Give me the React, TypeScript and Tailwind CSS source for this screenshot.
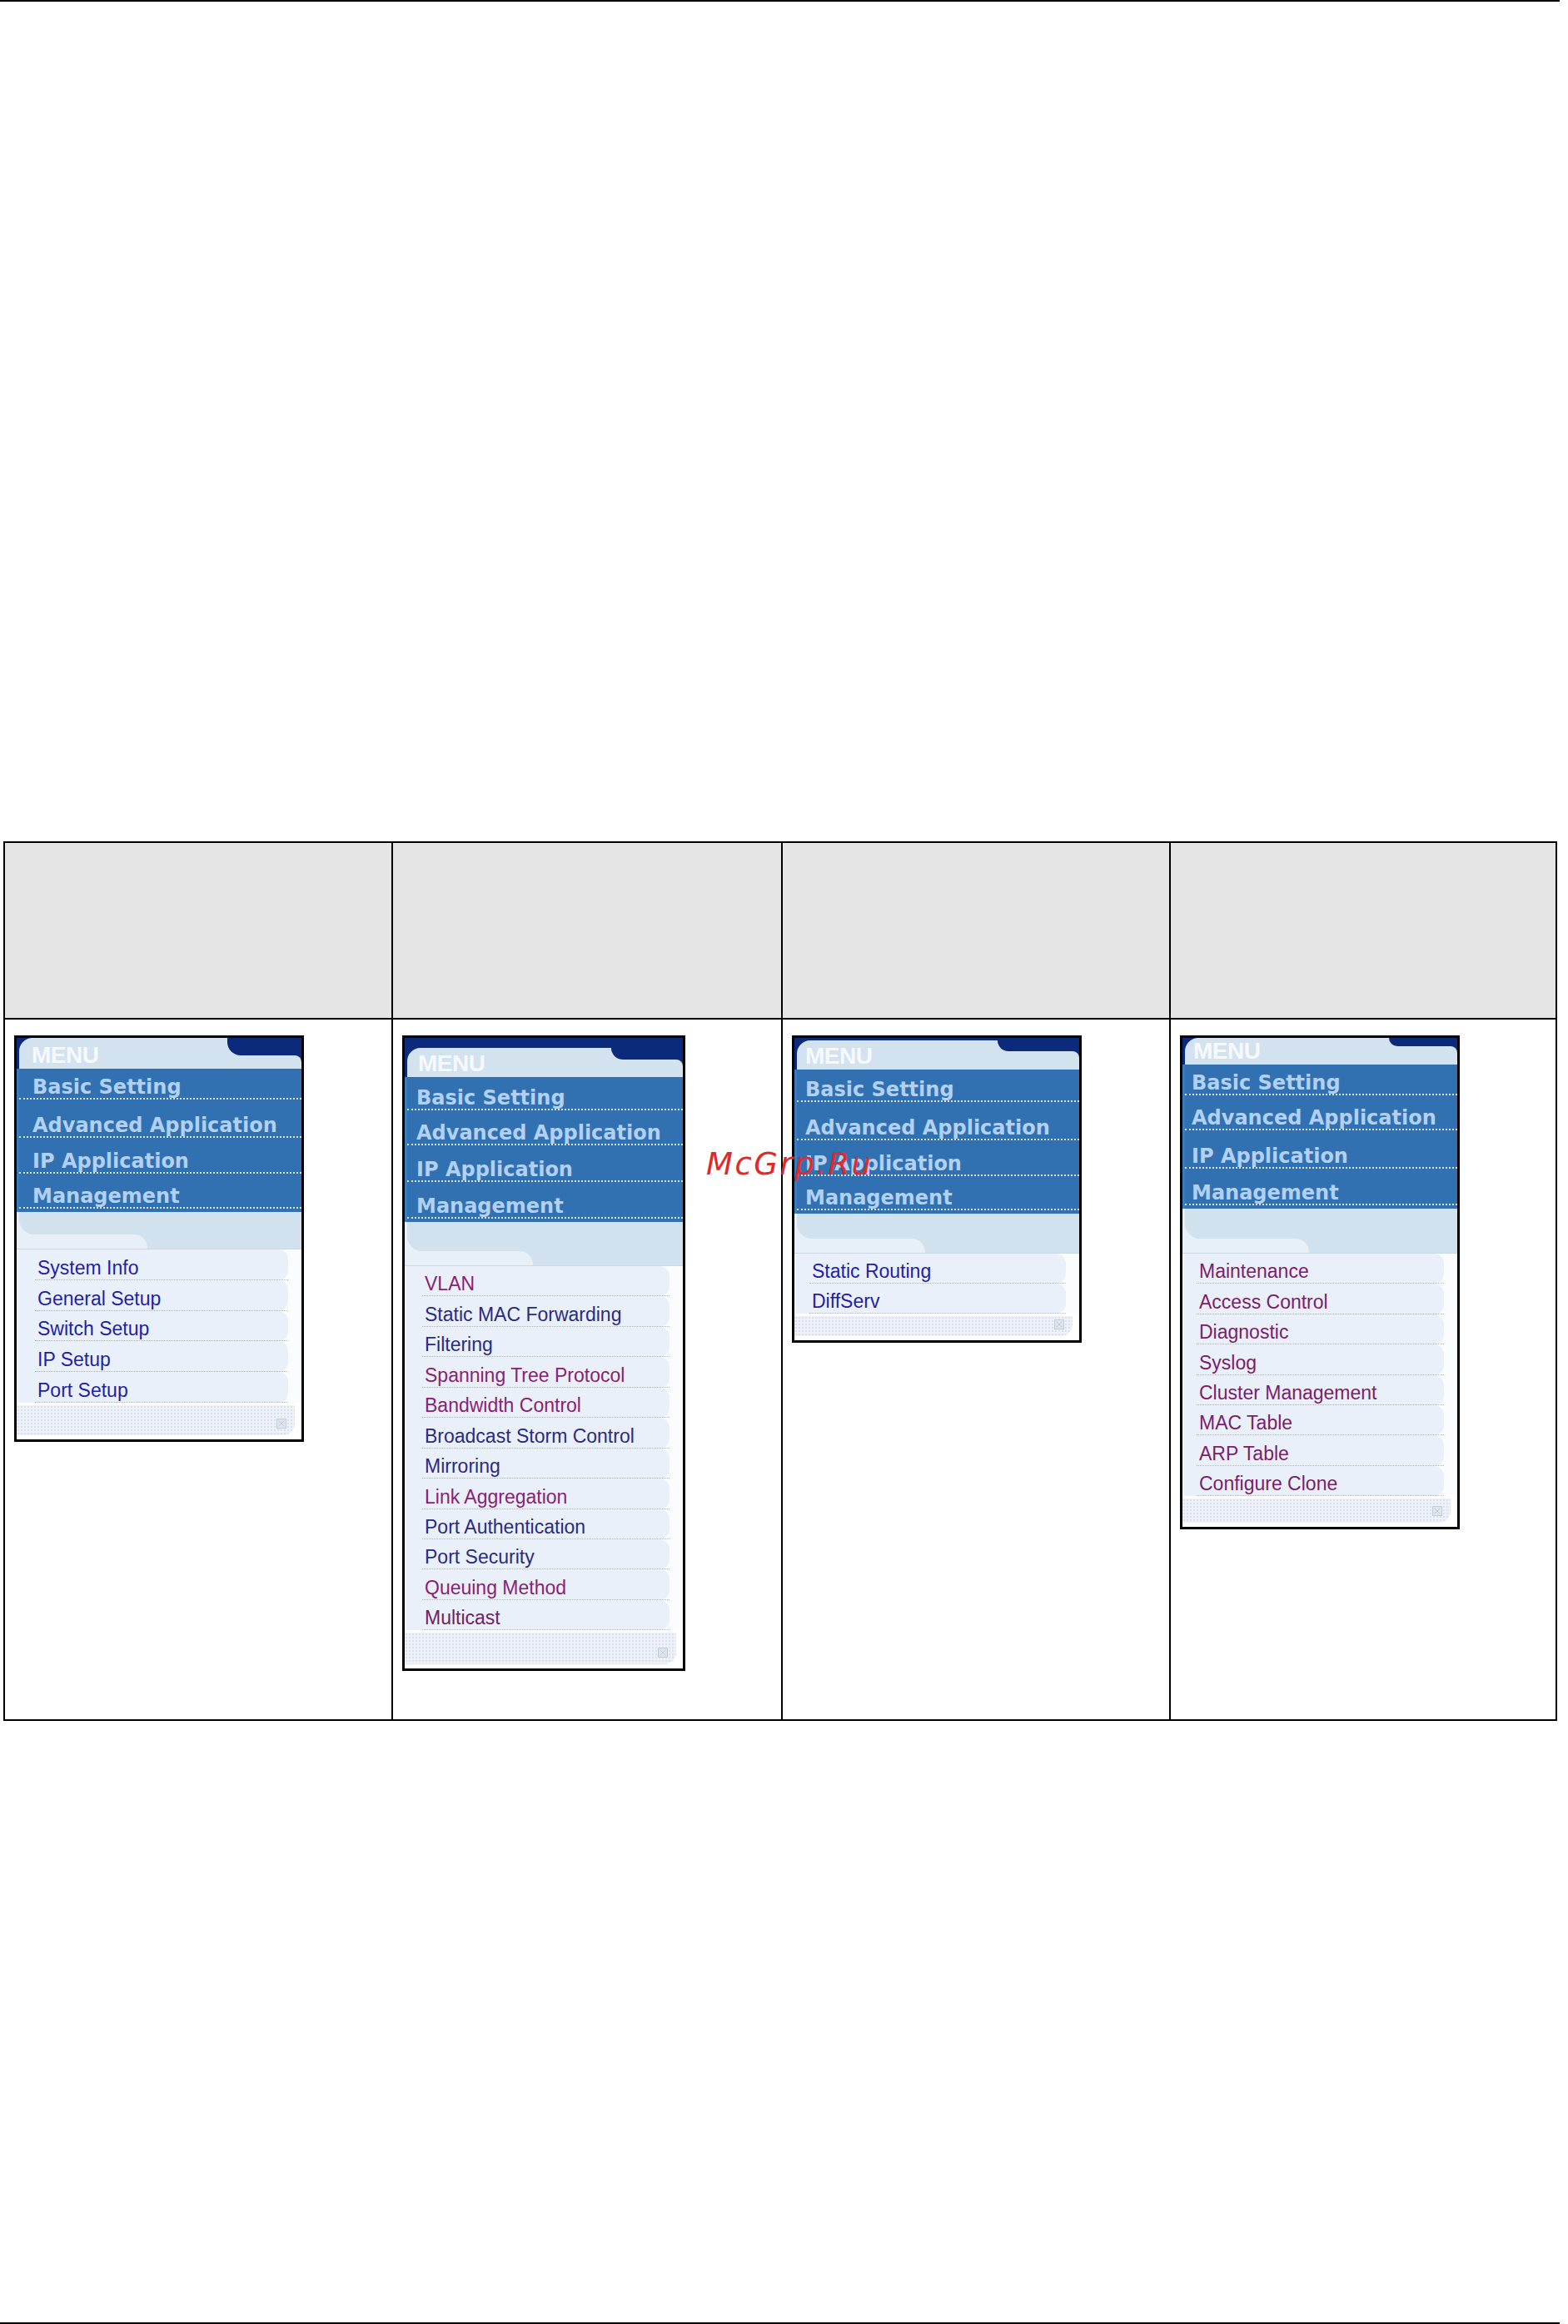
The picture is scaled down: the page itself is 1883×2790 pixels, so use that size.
import React from "react";

type Item = { t: string; c: string };
type MenuCfg = {
  w: number;
  h: number;
  headerH: number;
  tabMt: number;
  notchLeft: number;
  notchH: number;
  menuPl: number;
  rows: number[];
  rowPl: number;
  bandH: number;
  itemH: number;
  itemPl: number;
  items: Item[];
  footerH: number;
};

const BLUE1 = "#1f1fa8";
const NAVYTXT = "#2b2b80";
const PURP = "#8a2274";
const PURP4 = "#7c1d6c";

const rowLabels = ["Basic Setting", "Advanced Application", "IP Application", "Management"];

function Menu({ cfg }: { cfg: MenuCfg }) {
  return (
    <div
      className="border-[3px] border-black bg-white flex flex-col overflow-hidden"
      style={{ width: cfg.w, height: cfg.h }}
    >
      {/* header */}
      <div className="bg-[#0c2a7c] flex flex-col shrink-0" style={{ height: cfg.headerH }}>
        <div
          className="relative flex-1 bg-[#d3e2ef] rounded-tl-[16px] rounded-tr-[10px] ml-[3px] flex items-end"
          style={{ marginTop: cfg.tabMt }}
        >
          <div
            className="absolute top-0 right-0 bg-[#0c2a7c] rounded-bl-[16px]"
            style={{ left: cfg.notchLeft, height: cfg.notchH }}
          />
          <div className="absolute right-0 bg-[#0c2a7c] w-[8px] h-[8px]" style={{ top: cfg.notchH }}>
            <div className="w-full h-full bg-[#d3e2ef] rounded-tr-[8px]" />
          </div>
          <span
            className="relative text-[28px] leading-none font-bold text-[#f6f9fd] pb-[2px] tracking-[-0.5px]"
            style={{ fontFamily: '"Liberation Sans", Arial, sans-serif', paddingLeft: cfg.menuPl }}
          >
            MENU
          </span>
        </div>
      </div>
      {/* blue rows */}
      <div className="bg-[#3170b1] pb-[4px] shrink-0 border-l-[3px] border-[#3a7cc0]">
        {cfg.rows.map((rh, i) => (
          <div
            key={i}
            className="flex items-end border-b-2 border-dotted border-[#d4e4f4]"
            style={{ height: rh }}
          >
            <span
              className="text-[24px] leading-none font-bold text-[#b2d1f2] pb-[1px]"
              style={{ fontFamily: '"DejaVu Sans", Verdana, sans-serif', paddingLeft: cfg.rowPl - 3 }}
            >
              {rowLabels[i]}
            </span>
          </div>
        ))}
      </div>
      {/* band */}
      <div className="bg-[#e7eff7] flex flex-col shrink-0 border-b border-[#c9d7e6]" style={{ height: cfg.bandH }}>
        <div className="flex-1 bg-[#d2e1ee] rounded-bl-[18px] ml-[3px]" />
        <div className="h-[17px] bg-[#d2e1ee] flex">
          <div className="w-[46%] h-full bg-[#e7eff7] rounded-tr-[16px]" />
        </div>
      </div>
      {/* items */}
      <div className="flex flex-col shrink-0 bg-[#fbfcfe]">
        {cfg.items.map((it, i) => (
          <div key={i} className="pr-[16px] pl-[2px]" style={{ height: cfg.itemH }}>
            <div className="h-full bg-[#e9f0f9] rounded-r-[12px] flex items-end">
              <div
                className="flex-1 border-b border-dotted border-[#a9b7cc] pb-[2px]"
                style={{ marginLeft: cfg.itemPl - 5 }}
              >
                <span
                  className="block text-[23px] leading-none pl-[3px]"
                  style={{ fontFamily: '"Liberation Sans", Arial, sans-serif', color: it.c }}
                >
                  {it.t}
                </span>
              </div>
            </div>
          </div>
        ))}
      </div>
      {/* footer */}
      <div className="flex-1 flex flex-col pt-[3px] pb-[5px] pr-[8px]">
        <div className="relative flex-1 bg-[#eef2f8] bg-[radial-gradient(circle,#d8e0eb_0.9px,transparent_1.1px)] bg-size-[4px_4px] rounded-br-[14px] flex items-end justify-end pr-[10px] pb-[8px]">
          <svg width="12" height="12" viewBox="0 0 12 12">
            <rect x="0.5" y="0.5" width="11" height="11" fill="#dfe5ee" stroke="#c2ccd9" />
            <path d="M2.5 2.5 L9.5 9.5 M9.5 2.5 L2.5 9.5" stroke="#c2ccd9" strokeWidth="1" />
          </svg>
        </div>
      </div>
    </div>
  );
}

const menu1: MenuCfg = {
  w: 348,
  h: 488,
  headerH: 37,
  tabMt: 0,
  notchLeft: 250,
  notchH: 21,
  menuPl: 15,
  rows: [37, 46, 43, 42],
  rowPl: 19,
  bandH: 45,
  itemH: 36.8,
  itemPl: 25,
  items: [
    { t: "System Info", c: BLUE1 },
    { t: "General Setup", c: BLUE1 },
    { t: "Switch Setup", c: BLUE1 },
    { t: "IP Setup", c: BLUE1 },
    { t: "Port Setup", c: BLUE1 },
  ],
  footerH: 44,
};

const menu2: MenuCfg = {
  w: 340,
  h: 763,
  headerH: 47,
  tabMt: 12,
  notchLeft: 245,
  notchH: 14,
  menuPl: 13,
  rows: [40, 42, 44, 44],
  rowPl: 14,
  bandH: 53,
  itemH: 36.45,
  itemPl: 24,
  items: [
    { t: "VLAN", c: PURP },
    { t: "Static MAC Forwarding", c: NAVYTXT },
    { t: "Filtering", c: NAVYTXT },
    { t: "Spanning Tree Protocol", c: PURP },
    { t: "Bandwidth Control", c: PURP },
    { t: "Broadcast Storm Control", c: NAVYTXT },
    { t: "Mirroring", c: NAVYTXT },
    { t: "Link Aggregation", c: PURP },
    { t: "Port Authentication", c: NAVYTXT },
    { t: "Port Security", c: NAVYTXT },
    { t: "Queuing Method", c: PURP },
    { t: "Multicast", c: "#702068" },
  ],
  footerH: 45,
};

const menu3: MenuCfg = {
  w: 348,
  h: 369,
  headerH: 38,
  tabMt: 3,
  notchLeft: 241,
  notchH: 13,
  menuPl: 10,
  rows: [39, 46, 43, 41],
  rowPl: 13,
  bandH: 48,
  itemH: 36,
  itemPl: 21,
  items: [
    { t: "Static Routing", c: BLUE1 },
    { t: "DiffServ", c: BLUE1 },
  ],
  footerH: 32,
};

const menu4: MenuCfg = {
  w: 336,
  h: 593,
  headerH: 32,
  tabMt: 0,
  notchLeft: 245,
  notchH: 10,
  menuPl: 10,
  rows: [37, 42, 46, 44],
  rowPl: 11,
  bandH: 54,
  itemH: 36.4,
  itemPl: 20,
  items: [
    { t: "Maintenance", c: PURP4 },
    { t: "Access Control", c: PURP4 },
    { t: "Diagnostic", c: PURP4 },
    { t: "Syslog", c: PURP4 },
    { t: "Cluster Management", c: PURP4 },
    { t: "MAC Table", c: PURP4 },
    { t: "ARP Table", c: PURP4 },
    { t: "Configure Clone", c: PURP4 },
  ],
  footerH: 37,
};

export default function App() {
  const menus = [menu1, menu2, menu3, menu4];
  return (
    <div className="relative w-[1883px] h-[2790px] bg-white overflow-hidden">
      <div className="h-[2px] w-[1873px] bg-black" />
      <div className="mt-[1008px] ml-[4px] w-[1866px] border-2 border-black">
        <div className="grid grid-cols-[464px_468px_466px_464px] h-[210px]">
          <div className="bg-[#e5e5e5]" />
          <div className="bg-[#e5e5e5] border-l-2 border-black" />
          <div className="bg-[#e5e5e5] border-l-2 border-black" />
          <div className="bg-[#e5e5e5] border-l-2 border-black" />
        </div>
        <div className="grid grid-cols-[464px_468px_466px_464px] h-[842px] border-t-2 border-black">
          {menus.map((m, i) => (
            <div key={i} className={`pt-[19px] pl-[11px] ${i > 0 ? "border-l-2 border-black" : ""}`}>
              <Menu cfg={m} />
            </div>
          ))}
        </div>
      </div>
      <div className="mt-[722px] h-[2px] w-[1873px] bg-black" />
      <div
        className="absolute left-[848px] top-[1379px] text-[37px] leading-none italic text-[#e02a2a] tracking-[2.5px]"
        style={{ fontFamily: '"DejaVu Sans", sans-serif' }}
      >
        McGrp.Ru
      </div>
    </div>
  );
}
